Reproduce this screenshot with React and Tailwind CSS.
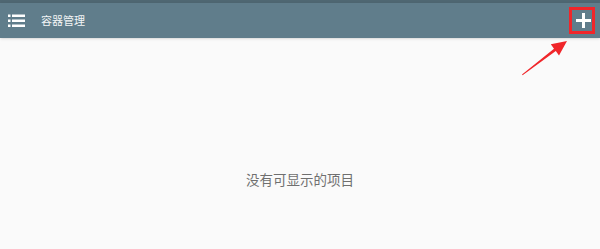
import React from "react";

function ListIcon() {
    return (
        <svg width="17" height="13" viewBox="0 0 17 13" fill="none">
            <rect x="0" y="0.5" width="2.5" height="2.5" fill="#fff" />
            <rect x="0" y="5.5" width="2.5" height="2.5" fill="#fff" />
            <rect x="0" y="10.5" width="2.5" height="2.5" fill="#fff" />
            <rect x="4" y="0.5" width="13" height="2.5" fill="#fff" />
            <rect x="4" y="5.5" width="13" height="2.5" fill="#fff" />
            <rect x="4" y="10.5" width="13" height="2.5" fill="#fff" />
        </svg>
    );
}

export default function App() {
    return (
        <div
            className="relative w-[600px] h-[249px] bg-[#fafafa] overflow-hidden flex flex-col"
            style={{ fontFamily: '"Noto Sans", "Noto Sans CJK SC", sans-serif' }}
        >
            {/* Status strip */}
            <div className="h-[3px] bg-[#4f6772]" />

            {/* Toolbar */}
            <div className="h-[35px] bg-[#607d8b] flex items-center pl-[8px] pr-[5px] shadow-sm">
                <ListIcon />
                <span className="ml-[16px] text-[11px] text-[#f2f5f6] leading-none">容器管理</span>
                <div className="ml-auto relative w-[26px] h-[27px] flex items-center justify-center">
                    <svg width="15" height="15" viewBox="0 0 15 15" className="ml-[2px]">
                        <rect x="6" y="0" width="3" height="15" fill="#fff" />
                        <rect x="0" y="6" width="15" height="3" fill="#fff" />
                    </svg>
                    {/* Annotation box */}
                    <div className="absolute inset-0 border-[3px] border-[#f0262a]" />
                </div>
            </div>

            {/* Empty state */}
            <div className="flex-1 flex items-start justify-center pt-[136px]">
                <span className="text-[13.5px] text-[#6f6f6f] leading-none">没有可显示的项目</span>
            </div>

            {/* Annotation arrow */}
            <svg className="absolute left-[518px] top-[36px]" width="54" height="44" viewBox="0 0 54 44">
                <polygon
                    points="4,38.5 36,12.7 32.8,8.3 49,5 41,19.5 37.8,15.1 4.6,39.2"
                    fill="#f0262a"
                />
            </svg>
        </div>
    );
}
